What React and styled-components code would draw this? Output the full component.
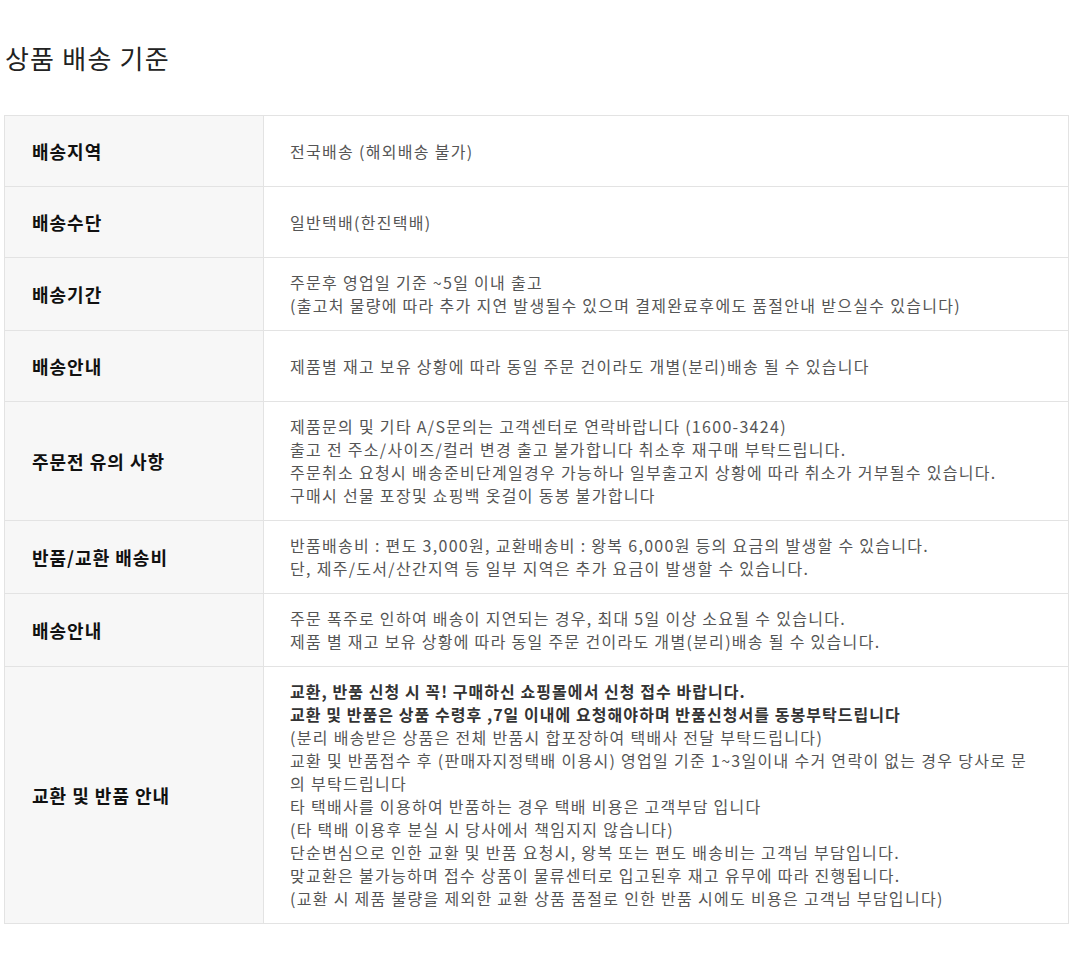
import React from "react";
import styled, { createGlobalStyle } from "styled-components";

const GlobalStyle = createGlobalStyle`
  body {
    margin: 0;
    background: #fff;
    font-family: "Noto Sans CJK KR", "Noto Sans", sans-serif;
  }
`

const Page = styled.div`
  padding: 0 4px 40px;
`
const Title = styled.h2`
  margin: 40px 0 39px 1px;
  font-size: 26px;
  line-height: 36px;
  font-weight: 400;
  letter-spacing: 1.2px;
  color: #222;
`
const Table = styled.div`
  border: 1px solid #e3e3e3;
  border-bottom: none;
`
const Row = styled.div`
  display: grid;
  grid-template-columns: 259px 1fr;
  min-height: 70px;
  border-bottom: 1px solid #e3e3e3;
`
const Label = styled.div`
  display: flex;
  align-items: center;
  padding-left: 27px;
  background: #f7f7f7;
  border-right: 1px solid #e3e3e3;
  font-size: 18px;
  font-weight: 700;
  letter-spacing: 1px;
  color: #111;
`
const Value = styled.div`
  display: flex;
  flex-direction: column;
  justify-content: center;
  padding: 13px 26px;
  font-size: 16px;
  line-height: 23px;
  letter-spacing: 1.3px;
  color: #555;
`
const Line = styled.div`
  white-space: nowrap;
  font-weight: ${p => (p.$strong ? 700 : 400)};
  color: ${p => (p.$strong ? "#333" : "inherit")};
  letter-spacing: ${p => (p.$strong ? "1.05px" : "inherit")};
`

const rows = [
  { label: "배송지역", lines: ["전국배송 (해외배송 불가)"] },
  { label: "배송수단", lines: ["일반택배(한진택배)"] },
  {
    label: "배송기간",
    lines: [
      "주문후 영업일 기준 ~5일 이내 출고",
      "(출고처 물량에 따라 추가 지연 발생될수 있으며 결제완료후에도 품절안내 받으실수 있습니다)",
    ],
  },
  { label: "배송안내", lines: ["제품별 재고 보유 상황에 따라 동일 주문 건이라도 개별(분리)배송 될 수 있습니다"] },
  {
    label: "주문전 유의 사항",
    lines: [
      "제품문의 및 기타 A/S문의는 고객센터로 연락바랍니다 (1600-3424)",
      "출고 전 주소/사이즈/컬러 변경 출고 불가합니다 취소후 재구매 부탁드립니다.",
      "주문취소 요청시 배송준비단계일경우 가능하나 일부출고지 상황에 따라 취소가 거부될수 있습니다.",
      "구매시 선물 포장및 쇼핑백 옷걸이 동봉 불가합니다",
    ],
  },
  {
    label: "반품/교환 배송비",
    lines: [
      "반품배송비 : 편도 3,000원, 교환배송비 : 왕복 6,000원 등의 요금의 발생할 수 있습니다.",
      "단, 제주/도서/산간지역 등 일부 지역은 추가 요금이 발생할 수 있습니다.",
    ],
  },
  {
    label: "배송안내",
    lines: [
      "주문 폭주로 인하여 배송이 지연되는 경우, 최대 5일 이상 소요될 수 있습니다.",
      "제품 별 재고 보유 상황에 따라 동일 주문 건이라도 개별(분리)배송 될 수 있습니다.",
    ],
  },
  {
    label: "교환 및 반품 안내",
    strong: 2,
    lines: [
      "교환, 반품 신청 시 꼭! 구매하신 쇼핑몰에서 신청 접수 바랍니다.",
      "교환 및 반품은 상품 수령후 ,7일 이내에 요청해야하며 반품신청서를 동봉부탁드립니다",
      "(분리 배송받은 상품은 전체 반품시 합포장하여 택배사 전달 부탁드립니다)",
      "교환 및 반품접수 후 (판매자지정택배 이용시) 영업일 기준 1~3일이내 수거 연락이 없는 경우 당사로 문",
      "의 부탁드립니다",
      "타 택배사를 이용하여 반품하는 경우 택배 비용은 고객부담 입니다",
      "(타 택배 이용후 분실 시 당사에서 책임지지 않습니다)",
      "단순변심으로 인한 교환 및 반품 요청시, 왕복 또는 편도 배송비는 고객님 부담입니다.",
      "맞교환은 불가능하며 접수 상품이 물류센터로 입고된후 재고 유무에 따라 진행됩니다.",
      "(교환 시 제품 불량을 제외한 교환 상품 품절로 인한 반품 시에도 비용은 고객님 부담입니다)",
    ],
  },
]

export default function App() {
  return (
    <Page>
      <GlobalStyle />
      <Title>상품 배송 기준</Title>
      <Table>
        {rows.map((r, i) => (
          <Row key={i}>
            <Label>{r.label}</Label>
            <Value>
              {r.lines.map((l, j) => (
                <Line key={j} $strong={r.strong && j < r.strong}>{l}</Line>
              ))}
            </Value>
          </Row>
        ))}
      </Table>
    </Page>
  )
}
